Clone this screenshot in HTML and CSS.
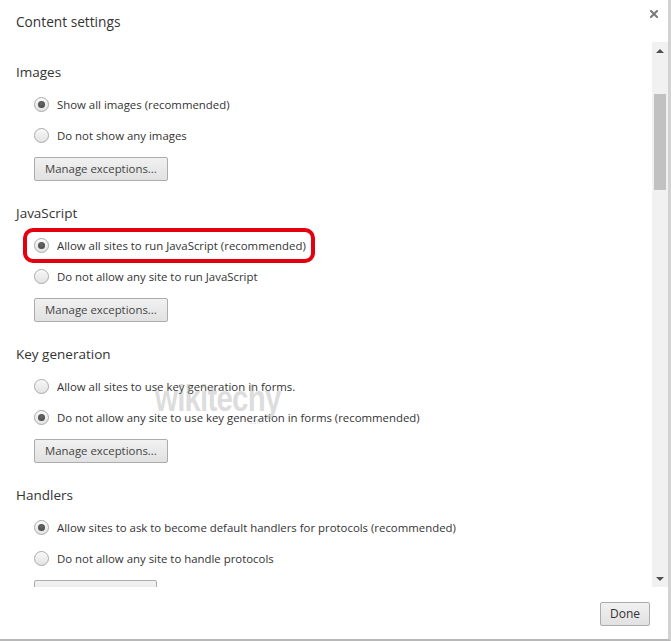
FILE: index.html
```html
<!DOCTYPE html>
<html>
<head>
<meta charset="utf-8">
<title>Content settings</title>
<link rel="stylesheet" href="styles.css">
</head>
<body>
<div class="dialog">
  <div class="header">
    <div class="title">Content settings</div>
    <svg class="close" width="8" height="8" viewBox="0 0 8 8"><path d="M1 1 L7 7 M7 1 L1 7" stroke="#7a7a7a" stroke-width="2" stroke-linecap="square"/></svg>
  </div>
  <div class="scroller">
    <div class="content">
      <section class="group">
        <h2 class="heading">Images</h2>
        <div class="option"><span class="radio checked"></span><span class="label">Show all images (recommended)</span></div>
        <div class="option"><span class="radio"></span><span class="label">Do not show any images</span></div>
        <div class="btn">Manage exceptions...</div>
      </section>
      <section class="group">
        <h2 class="heading">JavaScript</h2>
        <div class="option highlight"><span class="radio checked"></span><span class="label">Allow all sites to run JavaScript (recommended)</span></div>
        <div class="option"><span class="radio"></span><span class="label">Do not allow any site to run JavaScript</span></div>
        <div class="btn">Manage exceptions...</div>
      </section>
      <section class="group">
        <h2 class="heading">Key generation</h2>
        <div class="option"><span class="radio"></span><span class="label">Allow all sites to use key generation in forms.</span></div>
        <div class="option"><span class="radio checked"></span><span class="label">Do not allow any site to use key generation in forms (recommended)</span></div>
        <div class="btn">Manage exceptions...</div>
      </section>
      <section class="group">
        <h2 class="heading">Handlers</h2>
        <div class="option"><span class="radio checked"></span><span class="label">Allow sites to ask to become default handlers for protocols (recommended)</span></div>
        <div class="option"><span class="radio"></span><span class="label">Do not allow any site to handle protocols</span></div>
        <div class="btn">Manage handlers...</div>
      </section>
    </div>
    <div class="scrollbar">
      <div class="arrow up"></div>
      <div class="track"><div class="thumb"></div></div>
      <div class="arrow down"></div>
    </div>
  </div>
  <div class="footer">
    <div class="btn done">Done</div>
  </div>
  <div class="watermark">wikitechy<span class="wm-com">.com</span></div>
</div>
</body>
</html>
```
FILE: styles.css
```css
html, body {
  margin: 0;
  padding: 0;
  background: #ffffff;
}
body {
  font-family: "Open Sans", "Noto Sans", sans-serif;
  color: #333333;
}
.dialog {
  position: relative;
  width: 668px;
  height: 639px;
  background: #ffffff;
  border-right: 3px solid #d2d2d2;
  border-bottom: 2px solid #b8b8b8;
  display: flex;
  flex-direction: column;
  overflow: hidden;
}
.header {
  height: 42px;
  flex: none;
  display: flex;
  justify-content: space-between;
  align-items: flex-start;
}
.title {
  padding: 12px 0 0 16px;
  font-size: 13.7px;
  line-height: 20px;
  color: #333;
}
.close {
  margin: 10px 10px 0 0;
  display: block;
}
.scroller {
  height: 545px;
  flex: none;
  display: flex;
}
.content {
  flex: 1;
  overflow: hidden;
  padding: 20px 0 0 16px;
}
.group {
  display: flex;
  flex-direction: column;
  align-items: flex-start;
  margin-bottom: 22px;
}
.heading {
  margin: 0 0 12px 0;
  font-size: 13.5px;
  font-weight: normal;
  line-height: 20px;
  height: 20px;
  color: #333;
}
.option {
  display: flex;
  align-items: center;
  height: 20px;
  margin: 0 0 11px 18px;
  font-size: 11.4px;
  color: #333;
}
.option + .option {
  margin-bottom: 12px;
}
.radio {
  position: relative;
  width: 13px;
  height: 13px;
  border: 1px solid #a9a9a9;
  border-radius: 50%;
  background: linear-gradient(#f7f7f7, #e3e3e3);
  box-shadow: inset 0 1px 1px rgba(255,255,255,0.8);
  margin: 1px 8px 0 0;
  flex: none;
}
.radio.checked::after {
  content: "";
  position: absolute;
  left: 3px;
  top: 3px;
  width: 7px;
  height: 7px;
  border-radius: 50%;
  background: radial-gradient(circle at 50% 40%, #6a6a6a, #3e3e3e);
}
.label {
  white-space: nowrap;
  line-height: 20px;
  padding-top: 1px;
}
.highlight {
  position: relative;
}
.highlight::after {
  content: "";
  position: absolute;
  left: -11px;
  right: -9px;
  top: -7px;
  bottom: -8px;
  border: 4px solid #e3000f;
  border-radius: 10px;
}
.btn {
  margin-left: 18px;
  height: 22px;
  line-height: 22px;
  padding: 0 10px;
  border: 1px solid #acacac;
  border-radius: 2px;
  background: linear-gradient(#f1f1f1, #e1e1e1);
  font-size: 11.4px;
  color: #444;
  white-space: nowrap;
}
.scrollbar {
  width: 16px;
  flex: none;
  display: flex;
  flex-direction: column;
  background: #f1f1f1;
}
.arrow {
  height: 17px;
  flex: none;
  display: flex;
  align-items: center;
  justify-content: center;
}
.arrow::before {
  content: "";
  width: 0;
  height: 0;
  border-left: 4px solid transparent;
  border-right: 4px solid transparent;
}
.arrow.up::before {
  border-bottom: 4px solid #505050;
}
.arrow.down::before {
  border-top: 4px solid #505050;
}
.track {
  flex: 1;
  padding: 35px 2px 0 2px;
}
.thumb {
  height: 96px;
  background: #c1c1c1;
}
.footer {
  flex: 1;
  display: flex;
  justify-content: flex-end;
  align-items: flex-start;
  padding: 15px 18px 0 0;
}
.btn.done {
  margin-left: 0;
  padding: 0 9px;
  font-size: 12px;
  color: #333;
}
.watermark {
  position: absolute;
  left: 155px;
  top: 378px;
  font-family: "Liberation Sans", sans-serif;
  font-weight: bold;
  font-size: 36px;
  letter-spacing: -1px;
  color: rgba(165, 165, 165, 0.38);
  transform: scaleX(0.82);
  transform-origin: left top;
  pointer-events: none;
}
.wm-com {
  position: absolute;
  left: 112px;
  top: 38px;
  font-size: 9px;
  font-weight: normal;
  letter-spacing: 0;
}
```
